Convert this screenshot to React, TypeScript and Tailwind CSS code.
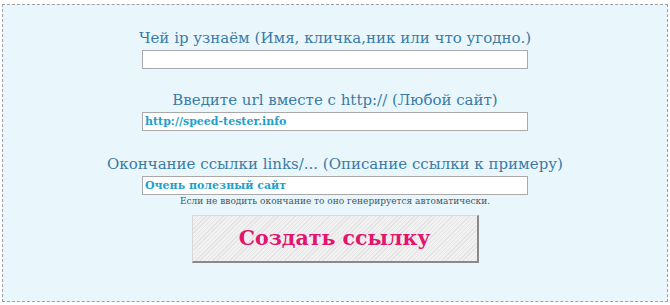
import React from 'react';

const serif = { fontFamily: '"DejaVu Serif", "Liberation Serif", serif' };

function Field({ label, value, mt }: { label: string; value?: string; mt: string }) {
    return (
        <div className={`flex flex-col items-center ${mt}`}>
            <div className="text-[15px] leading-[20px] text-[#3b7ba6]">{label}</div>
            <input
                readOnly
                value={value ?? ''}
                className="mt-[2px] h-[19px] w-[386px] border border-[#a9a9a9] bg-white px-[2px] text-[11px] font-bold text-[#1ea0cc] outline-none"
                style={serif}
            />
        </div>
    );
}

export default function App() {
    return (
        <div className="h-[305px] w-[670px] bg-white px-[2px] pt-[4px]" style={serif}>
            <div className="flex h-[298px] flex-col items-center border border-dashed border-[#a0a0a0] bg-[#e9f7fd] pt-[23px]">
                <Field label="Чей ip узнаём (Имя, кличка,ник или что угодно.)" mt="mt-0" />
                <Field label="Введите url вместе с http:// (Любой сайт)" value="http://speed-tester.info" mt="mt-[21px]" />
                <Field label="Окончание ссылки links/... (Описание ссылки к примеру)" value="Очень полезный сайт" mt="mt-[23px]" />
                <div className="text-[9px] leading-[12px] text-[#3a5566]">
                    Если не вводить окончание то оно генерируется автоматически.
                </div>
                <button className="mt-[8px] flex h-[48px] w-[287px] items-center justify-center border-t border-l border-r-2 border-b-2 border-t-[#d8d8d8] border-l-[#d8d8d8] border-r-[#8a8a8a] border-b-[#8a8a8a] bg-[repeating-linear-gradient(135deg,#e4e4e4_0px,#e4e4e4_1px,#f1f1f1_1px,#f1f1f1_3px)] text-[20.5px] font-bold text-[#e2146e]">
                    Создать ссылку
                </button>
            </div>
        </div>
    );
}
